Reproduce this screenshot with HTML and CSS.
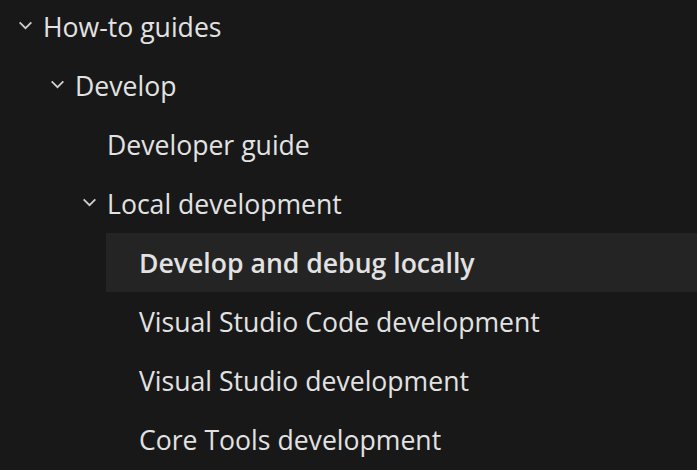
FILE: index.html
```html
<!DOCTYPE html>
<html>
<head>
<meta charset="utf-8">
<link rel="stylesheet" href="styles.css">
</head>
<body>
<ul class="tree">
  <li class="row lvl0"><span class="chev"><svg viewBox="0 0 16 10" width="15" height="9"><path d="M1.5 1.5 L8 8 L14.5 1.5" fill="none" stroke="currentColor" stroke-width="2"/></svg></span><span class="label">How-to guides</span></li>
  <li class="row lvl1"><span class="chev"><svg viewBox="0 0 16 10" width="15" height="9"><path d="M1.5 1.5 L8 8 L14.5 1.5" fill="none" stroke="currentColor" stroke-width="2"/></svg></span><span class="label">Develop</span></li>
  <li class="row lvl2 leaf"><span class="label">Developer guide</span></li>
  <li class="row lvl2"><span class="chev"><svg viewBox="0 0 16 10" width="15" height="9"><path d="M1.5 1.5 L8 8 L14.5 1.5" fill="none" stroke="currentColor" stroke-width="2"/></svg></span><span class="label">Local development</span></li>
  <li class="row lvl3 active"><span class="label">Develop and debug locally</span></li>
  <li class="row lvl3"><span class="label">Visual Studio Code development</span></li>
  <li class="row lvl3"><span class="label">Visual Studio development</span></li>
  <li class="row lvl3"><span class="label">Core Tools development</span></li>
</ul>
</body>
</html>
```
FILE: styles.css
```css
html, body {
  margin: 0;
  padding: 0;
  background: #181818;
  height: 100%;
  overflow: hidden;
}
.tree {
  list-style: none;
  margin: 0;
  padding: 0;
  font-family: "Open Sans", "Noto Sans", sans-serif;
  font-size: 26.6px;
  color: #e2e2e2;
  margin-top: -3px;
}
.row {
  height: 59px;
  display: flex;
  align-items: center;
  white-space: nowrap;
}
.chev {
  width: 25px;
  flex: none;
  display: flex;
  align-items: center;
  color: #cfcfcf;
  padding-bottom: 3px;
}
.chev svg { display: block; }
.lvl0 { padding-left: 18px; }
.lvl1 { padding-left: 50px; }
.lvl2 { padding-left: 82px; }
.lvl2.leaf { padding-left: 107px; }
.lvl3 { padding-left: 139px; }
.active {
  margin-left: 106px;
  padding-left: 33px;
  background: #242424;
  font-weight: 600;
}
```
